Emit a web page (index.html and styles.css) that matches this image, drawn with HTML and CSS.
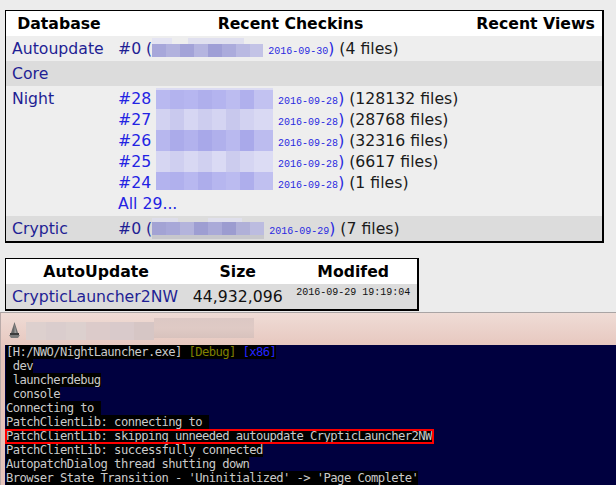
FILE: index.html
```html
<!DOCTYPE html>
<html>
<head>
<meta charset="utf-8">
<link rel="stylesheet" href="styles.css">
</head>
<body>
<div class="page">
  <table class="db">
    <tr>
      <th class="c1">Database</th>
      <th class="c2">Recent Checkins</th>
      <th class="c3">Recent Views</th>
    </tr>
    <tr class="light">
      <td><a class="v">Autoupdate</a></td>
      <td><a class="v">#0 (</a><span class="blur blur-a"></span> <span class="date">2016-09-30</span><span class="paren">)</span> (4 files)</td>
      <td></td>
    </tr>
    <tr class="dark">
      <td><a class="v">Core</a></td>
      <td></td>
      <td></td>
    </tr>
    <tr class="light">
      <td class="top"><a class="v">Night</a></td>
      <td>
        <div class="line"><a class="n">#28</a> <span class="blur bn bn-strong"></span> <span class="date">2016-09-28</span><span class="paren">)</span> (128132 files)</div>
        <div class="line"><a class="n">#27</a> <span class="blur bn bn-soft"></span> <span class="date">2016-09-28</span><span class="paren">)</span> (28768 files)</div>
        <div class="line"><a class="n">#26</a> <span class="blur bn bn-strong2"></span> <span class="date">2016-09-28</span><span class="paren">)</span> (32316 files)</div>
        <div class="line"><a class="n">#25</a> <span class="blur bn bn-soft2"></span> <span class="date">2016-09-28</span><span class="paren">)</span> (6617 files)</div>
        <div class="line"><a class="n">#24</a> <span class="blur bn bn-last"></span> <span class="date">2016-09-28</span><span class="paren">)</span> (1 files)</div>
        <div class="line"><a class="n">All 29...</a></div>
      </td>
      <td></td>
    </tr>
    <tr class="dark">
      <td><a class="v">Cryptic</a></td>
      <td><a class="v">#0 (</a><span class="blur blur-c"></span> <span class="date">2016-09-29</span><span class="paren">)</span> (7 files)</td>
      <td></td>
    </tr>
  </table>

  <table class="au">
    <tr>
      <th>AutoUpdate</th>
      <th>Size</th>
      <th>Modifed</th>
    </tr>
    <tr class="dark">
      <td><a class="v">CrypticLauncher2NW</a></td>
      <td class="size">44,932,096</td>
      <td class="mod"><span class="stamp">2016-09-29 19:19:04</span></td>
    </tr>
  </table>

  <div class="window">
    <div class="titlebar">
      <svg class="appicon" width="11" height="16" viewBox="0 0 11 16">
        <polygon points="5.5,0 9,11 2,11" fill="#6a6a6a"/>
        <polygon points="5.5,2 7.5,11 5.5,11" fill="#9a9a9a"/>
        <rect x="1" y="11" width="9" height="2" fill="#3c3c3c"/>
        <polygon points="0,13 11,13 9,16 2,16" fill="#7a7a7a"/>
      </svg>
      <div class="ttl">
        <span class="tb tb1"></span>
        <span class="tb tb2"></span>
        <span class="tb tb3"></span>
      </div>
    </div>
    <div class="console">
      <div class="ln"><span class="t">[H:/NWO/NightLauncher.exe] <span class="olive">[Debug]</span> <span class="blue">[x86]</span></span></div>
      <div class="ln"><span class="t"> dev</span></div>
      <div class="ln"><span class="t"> launcherdebug</span></div>
      <div class="ln"><span class="t"> console</span></div>
      <div class="ln"><span class="t">Connecting to </span></div>
      <div class="ln"><span class="t">PatchClientLib: connecting to </span></div>
      <div class="ln"><span class="t hl">PatchClientLib: skipping unneeded autoupdate CrypticLauncher2NW</span></div>
      <div class="ln"><span class="t">PatchClientLib: successfully connected</span></div>
      <div class="ln"><span class="t">AutopatchDialog thread shutting down</span></div>
      <div class="ln"><span class="t">Browser State Transition - 'Uninitialized' -&gt; 'Page Complete'</span></div>
    </div>
  </div>
</div>
</body>
</html>
```

FILE: styles.css
```css
html, body {
  margin: 0;
  height: 485px;
  overflow: hidden;
}

body {
  background: #ececec;
  font-family: "DejaVu Sans", Verdana, sans-serif;
  font-size: 15.7px;
  color: #1a1a1a;
}

.page {
  padding-top: 10px;
}

table {
  border-spacing: 0;
  border: 1px solid #000;
  border-right-width: 2px;
  border-bottom-width: 2px;
  margin-left: 5px;
  box-sizing: border-box;
}

th, td {
  padding: 2px 6px;
  height: 21px;
  line-height: 21px;
  white-space: nowrap;
}

th {
  font-weight: bold;
  text-align: center;
  background: #fff;
  color: #000;
}

td {
  text-align: left;
}

tr.light td {
  background: #eeeeee;
}

tr.dark td {
  background: #dcdcdc;
}

td.top {
  vertical-align: top;
}

.line {
  height: 21px;
}

.db {
  width: 599px;
}

.db .c1 {
  width: 94px;
}

.db .c3 {
  width: 121px;
}

a.v {
  color: #1f1f94;
}

a.n {
  color: #2323e3;
}

.date {
  font-family: "Liberation Mono", monospace;
  font-size: 10px;
  line-height: 10px;
  color: #2a2ae0;
}

.paren {
  color: #2a2ae0;
}

.blur {
  display: inline-block;
  vertical-align: top;
  height: 21px;
}

.blur-a {
  width: 111px;
  background:
    linear-gradient(to right, #a7a7da 0 14px, #b2b2de 14px 28px, #a3a3d8 28px 42px, #b5b5e0 42px 56px, #9f9fd6 56px 70px, #ababdc 70px 84px, #b9b9e2 84px 98px, #c3c3e6 98px) 0 6px / 100% 13px no-repeat,
    linear-gradient(to right, #e4e4f2 0 20px, transparent 20px 36px, #e0e0ef 36px 92px, transparent 92px) 0 0 / 100% 6px no-repeat;
}

.blur-c {
  width: 112px;
  background:
    linear-gradient(to right, #c7c7cc 0 112px) 0 17px / 100% 4px no-repeat,
    linear-gradient(to right, #a3a3d4 0 14px, #a8a8d8 14px 28px, #b4b4dc 28px 42px, #9e9ed2 42px 56px, #aaaad8 56px 70px, #9c9cd0 70px 84px, #b0b0d8 84px 98px, #bcbce0 98px) 0 4px / 100% 13px no-repeat,
    linear-gradient(to right, #dedeea 0 26px, transparent 26px 56px, #e0e0ec 56px 90px, transparent 90px) 0 0 / 100% 4px no-repeat;
}

.bn {
  width: 117px;
}

.bn-strong {
  background:
    linear-gradient(to right, #b9b9f0 0 14px, #b3b3ee 14px 28px, #b6b6f0 28px 42px, #afafec 42px 56px, #b4b4ef 56px 70px, #bcbcf0 70px 84px, #b0b0ed 84px 98px, #c2c2f1 98px) 0 2px / 100% 19px no-repeat,
    linear-gradient(to right, #dcdcf2 0 117px) 0 0 / 100% 2px no-repeat;
}

.bn-soft {
  background: linear-gradient(to right, #d2d2f1 0 14px, #c9c9ee 14px 28px, #d6d6f3 28px 42px, #cdcdef 42px 56px, #d4d4f2 56px 70px, #c8c8ed 70px 84px, #d2d2f1 84px 98px, #d9d9f3 98px);
}

.bn-strong2 {
  background: linear-gradient(to right, #b7b7ee 0 14px, #ababea 14px 28px, #b2b2ed 28px 42px, #a8a8e9 42px 56px, #b0b0ec 56px 70px, #b9b9ef 70px 84px, #a9a9ea 84px 98px, #bcbcef 98px);
}

.bn-soft2 {
  background: linear-gradient(to right, #d6d6f2 0 14px, #cfcff0 14px 28px, #d8d8f3 28px 42px, #d0d0f0 42px 56px, #dadaf4 56px 70px, #ccccee 70px 84px, #d5d5f2 84px 98px, #dcdcf4 98px);
}

.bn-last {
  background:
    linear-gradient(to right, #b3b3ee 0 14px, #b0b0ed 14px 28px, #b8b8f0 28px 42px, #adadeb 42px 56px, #b6b6ef 56px 70px, #bbbbf0 70px 84px, #aeaeec 84px 98px, #c0c0f0 98px) 0 0 / 100% 18px no-repeat;
}

/* second table */
.au {
  width: 414px;
  margin-top: 15px;
}

.au td.size {
  text-align: center;
  color: #111;
}

.au td.mod {
  vertical-align: top;
  text-align: center;
}

.stamp {
  font-family: "Liberation Mono", monospace;
  font-size: 10px;
  line-height: 14px;
  display: inline-block;
  vertical-align: top;
  color: #111;
}

/* console window */
.window {
  margin-top: 1px;
  border-top: 1px solid #a9a4a4;
  border-left: 1px solid #b9aaa8;
  background: linear-gradient(#efdcd6, #e5c3ba 40px, #e5c3ba);
}

.titlebar {
  height: 32px;
  display: flex;
  align-items: center;
  padding-left: 8px;
  gap: 6px;
}

.appicon {
  display: block;
  margin-top: 2px;
}

.ttl {
  display: flex;
  align-items: flex-start;
  height: 26px;
}

.tb {
  display: block;
}

.tb1 {
  width: 60px;
  height: 18px;
  margin-top: 6px;
  background: linear-gradient(to right, #ddd0ce 0 20px, #dacdcd 20px 40px, #dcd0ce 40px);
}

.tb2 {
  width: 68px;
  height: 18px;
  margin-top: 6px;
  background: linear-gradient(to right, #dccbca 0 24px, #d9cacb 24px 48px, #d6c6c5 48px);
}

.tb3 {
  width: 100px;
  height: 20px;
  margin-top: 2px;
  background: linear-gradient(#dcc8c4, #dfcac5 50%, #d8c2bd);
}

.console {
  margin-left: 4px;
  background: #00003f;
  padding-left: 1px;
  font-family: "DejaVu Sans Mono", monospace;
  font-size: 12.2px;
  letter-spacing: -0.58px;
  color: #cacaca;
}

.ln {
  height: 14px;
  line-height: 14px;
}

.t {
  display: inline-block;
  height: 14px;
  line-height: 14px;
  vertical-align: top;
  background: #000;
  white-space: pre;
}

.olive {
  color: #808000;
}

.blue {
  color: #2424ff;
}

.hl {
  position: relative;
}

.hl::after {
  content: "";
  position: absolute;
  left: -1px;
  right: -2px;
  top: 0;
  bottom: -1px;
  border: 2px solid #f00;
}
```
